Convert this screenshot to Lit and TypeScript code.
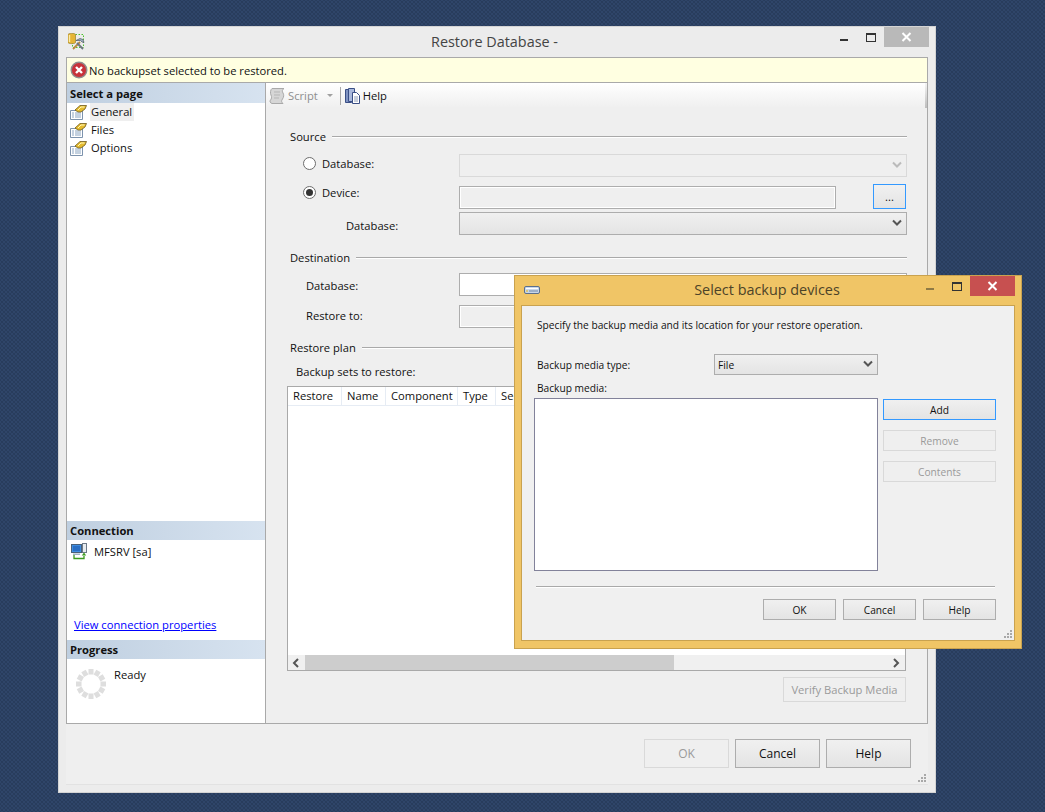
import { LitElement, html, css, svg } from "lit";
import { customElement } from "lit/decorators.js";

const chevron = (dir: "down" | "left" | "right", color = "#555") => {
  const d =
    dir === "down"
      ? "M1 1.5 5 5.5 9 1.5"
      : dir === "left"
        ? "M6 1 2 5 6 9"
        : "M2 1 6 5 2 9";
  return html`<svg width="10" height="10" viewBox="0 0 10 10" style="flex:none">
    <path d=${d} fill="none" stroke=${color} stroke-width="2" />
  </svg>`;
};

const pageIcon = html`<svg width="17" height="15" viewBox="0 0 17 15">
  <path d="M.5 5.500h12v9H.5z" fill="#fff" stroke="#7d93ad" />
  <path d="M2 8h2M5 8h6M2 10h2M5 10h6M2 12h2M5 12h6" stroke="#8aa4c0" />
  <path d="M5 5 10 .5h6.500L15 4l-4 3H8z" fill="#e5bb2e" stroke="#6e5a1c" stroke-width=".8" />
  <path d="M8 5l3-3h3.500" fill="none" stroke="#fff7b8" />
</svg>`;

const errorIcon = html`<svg width="18" height="18" viewBox="0 0 18 18">
  <circle cx="9" cy="9" r="7.800" fill="#c8323a" stroke="#8f8f8f" stroke-width="1.400" />
  <path d="M6 6l6 6M12 6l-6 6" stroke="#fff" stroke-width="2.400" />
</svg>`;

const appIcon = html`<svg width="18" height="18" viewBox="0 0 18 18">
  <rect x="4.500" y="1.500" width="11" height="13" fill="none" stroke="#4fc22e" stroke-dasharray="1.500 1.500" />
  <path d="M0 1.500C0 0 7.500 0 7.500 1.500v8C7.500 11 0 11 0 9.500z" fill="#e6b536" stroke="#97802a" stroke-width=".7" />
  <path d="M1.500 2v7" stroke="#fbeaa8" stroke-width="1.400" />
  <path d="M5 16 12 9" stroke="#b88a3c" stroke-width="1.800" />
  <path d="M15 16 9 10" stroke="#6d7680" stroke-width="1.800" />
  <path d="M8 7.500l4-2 3 1 1 3-2-.5-1.500-1.500z" fill="#9fb0c2" stroke="#4f5a66" stroke-width=".7" />
</svg>`;

const scriptIcon = html`<svg width="17" height="18" viewBox="0 0 17 18">
  <path d="M3 1.500h12c-2 1-2 3-1 4.500s1 4-.5 6-1 3 .5 4.500H3c-2-.5-2.500-2.500-1.500-3.500s1.500-3 .5-5-.5-5.500 1-6.500z" fill="#d6d6d6" stroke="#a9a9a9" />
  <path d="M5 5h6M5 8h6M5 11h5" stroke="#b5b5b5" />
</svg>`;

const helpIcon = html`<svg width="17" height="18" viewBox="0 0 17 18">
  <path d="M1.500 2.500h6v13h-6z" fill="#7f93c2" stroke="#3a4f86" />
  <path d="M4.500 1.500h6v13h-6z" fill="#a9b8dc" stroke="#3a4f86" />
  <path d="M8.500 5.500h4l3 3v8h-7z" fill="#fff" stroke="#3a4f86" />
  <path d="M10 10h4M10 12h4M10 14h4" stroke="#8f9db8" />
</svg>`;

const serverIcon = html`<svg width="17" height="17" viewBox="0 0 17 17">
  <rect x=".5" y="1.500" width="10" height="8" fill="#3f8de0" stroke="#4a6078" />
  <rect x="2" y="3" width="7" height="5" fill="#2a6fc4" />
  <path d="M2 10.500h7V12H2z" fill="#9fb0c2" />
  <rect x="11.500" y=".5" width="4" height="9" fill="#e8ecf0" stroke="#6d7a88" />
  <path d="M3 12v3.500h10V13" fill="none" stroke="#3b9a1e" stroke-width="1.300" />
  <path d="M13 9.500 10.800 12.500h4.400z" fill="#3b9a1e" />
</svg>`;

const driveIcon = html`<svg width="16" height="8" viewBox="0 0 16 8">
  <rect x=".5" y=".5" width="15" height="7" rx="1.500" fill="#c9d7ea" stroke="#5b6f8c" />
  <path d="M2 2.500h12" stroke="#fff" />
  <path d="M2 5h2" stroke="#d9c25a" stroke-width="1.400" />
  <path d="M5 5h9" stroke="#6f87a8" />
</svg>`;

const spinner = html`<svg width="32" height="32" viewBox="0 0 32 32">
  ${Array.from({ length: 12 }, (_, i) =>
    svg`<rect x="13.500" y="1" width="5" height="5.500" fill="#dedede" transform="rotate(${i * 30} 16 16)" />`,
  )}
</svg>`;

const grip = html`<svg class="grip" width="8" height="8" viewBox="0 0 8 8">
  <path d="M6 0h2v2H6zM3 3h2v2H3zM6 3h2v2H6zM0 6h2v2H0zM3 6h2v2H3zM6 6h2v2H6z" fill="#a8a8a8" />
</svg>`;

const controls = (closeClass: string, dark: string) => html`<div class="controls">
  <svg class="ctl-min" width="8" height="2"><rect width="8" height="2" fill=${dark} /></svg>
  <svg class="ctl-max" width="10" height="9">
    <rect x=".5" y=".5" width="9" height="8" fill="none" stroke="#333" />
    <rect x="0" y="0" width="10" height="2" fill="#333" />
  </svg>
  <div class="ctl-close ${closeClass}">
    <svg width="11" height="10" viewBox="0 0 11 10">
      <path d="M1.500 1 9.500 9M9.500 1 1.500 9" stroke="#fff" stroke-width="2" />
    </svg>
  </div>
</div>`;

@customElement("app-root")
export class AppRoot extends LitElement {
  static styles = css`
    :host {
      display: block;
      position: relative;
      width: 1045px;
      height: 812px;
      overflow: hidden;
      background-color: #2f4569;
      background-image: radial-gradient(#283c5c 0.7px, transparent 0.8px),
        radial-gradient(#283c5c 0.7px, transparent 0.8px);
      background-size: 4px 4px;
      background-position: 0 0, 2px 2px;
      font-family: "Open Sans", "Noto Sans", sans-serif;
      font-size: 11.2px;
      color: #111;
    }
    svg {
      display: block;
    }
    .window {
      position: absolute;
      box-sizing: border-box;
      display: flex;
      flex-direction: column;
    }
    .main {
      left: 58px;
      top: 26px;
      width: 878px;
      height: 767px;
      background: #ececec;
      border: 1px solid #d4d4d4;
    }
    .second {
      left: 514px;
      top: 275px;
      width: 508px;
      height: 374px;
      background: #f0c566;
      border: 1px solid #c9a24f;
    }
    .titlebar {
      position: relative;
      flex: none;
      box-sizing: border-box;
      padding-bottom: 2px;
      display: flex;
      align-items: center;
      justify-content: center;
      font-size: 14.4px;
      color: #444;
    }
    .main .titlebar {
      height: 30px;
      padding-right: 5px;
    }
    .second .titlebar {
      height: 29px;
      padding-right: 2px;
      color: #4d4328;
    }
    .title-icon {
      position: absolute;
      left: 9px;
      top: 6px;
    }
    .second .title-icon {
      left: 9px;
      top: 10px;
    }
    .controls {
      position: absolute;
      right: 6px;
      top: 0;
      display: flex;
      align-items: flex-start;
    }
    .ctl-min {
      margin-top: 12px;
      margin-right: 18px;
    }
    .ctl-max {
      margin-top: 6px;
      margin-right: 8px;
    }
    .ctl-close {
      width: 45px;
      height: 20px;
      display: flex;
      align-items: center;
      justify-content: center;
    }
    .close-grey {
      background: #b9b9b9;
    }
    .close-red {
      background: #c75050;
    }

    /* main window */
    .frame {
      flex: none;
      margin: 0 7px;
      height: 667px;
      box-sizing: border-box;
      border: 1px solid #a9a9a9;
      display: flex;
      flex-direction: column;
      background: #efefef;
    }
    .banner {
      flex: none;
      height: 24px;
      box-sizing: border-box;
      background: #ffffe1;
      display: flex;
      align-items: center;
      gap: 1px;
      padding-left: 3px;
    }
    .split {
      flex: 1;
      min-height: 0;
      display: flex;
      border-top: 1px solid #a9a9a9;
    }
    .left {
      flex: none;
      width: 199px;
      box-sizing: border-box;
      background: #fff;
      border-right: 1px solid #a9a9a9;
      display: flex;
      flex-direction: column;
    }
    .head {
      flex: none;
      height: 19px;
      padding-left: 3px;
      display: flex;
      align-items: center;
      font-weight: 700;
      background: linear-gradient(90deg, #bfcfe0, #d7e3f0);
    }
    .head.first {
      height: 20px;
    }
    .pages {
      flex: 1;
    }
    .page {
      height: 18px;
      display: flex;
      align-items: center;
      padding-left: 3px;
    }
    .page span {
      margin-left: 3px;
      padding: 0 2px 0 1px;
      line-height: 18px;
    }
    .page.on span {
      background: #efefef;
    }
    .conn {
      flex: none;
      height: 100px;
      padding-left: 4px;
      position: relative;
    }
    .conn-row {
      display: flex;
      align-items: center;
      gap: 6px;
      height: 22px;
    }
    .link {
      position: absolute;
      left: 7px;
      top: 77px;
      color: #0000ff;
      text-decoration: underline;
    }
    .prog {
      flex: none;
      height: 64px;
      box-sizing: border-box;
      padding: 9px 0 0 8px;
      display: flex;
      gap: 7px;
    }
    .prog span {
      margin-top: -1px;
    }
    .right {
      flex: 1;
      min-width: 0;
      display: flex;
      flex-direction: column;
    }
    .toolbar {
      flex: none;
      height: 25px;
      padding-left: 3px;
      display: flex;
      align-items: center;
      background: linear-gradient(#fff, #efefef);
      position: relative;
    }
    .toolbar::after {
      content: "";
      position: absolute;
      right: 0;
      top: 0;
      bottom: 0;
      width: 2px;
      background: linear-gradient(#f4f4f4, #bdbdbd);
    }
    .toolbar .muted {
      color: #8e8e8e;
      margin-left: 2px;
    }
    .tb-arrow {
      margin-left: 9px;
      width: 0;
      height: 0;
      border: 3px solid transparent;
      border-top: 3px solid #a0a0a0;
      border-bottom: 0;
    }
    .tb-sep {
      width: 1px;
      height: 18px;
      background: #a9a9a9;
      margin: 0 3px 0 7px;
    }
    .tb-help {
      margin-left: 2px;
    }
    .body {
      flex: 1;
      padding: 20px 20px 0 24px;
      display: flex;
      flex-direction: column;
    }
    .legend {
      height: 16px;
      display: flex;
      align-items: center;
      gap: 6px;
    }
    .legend::after {
      content: "";
      flex: 1;
      height: 1px;
      background: #a9a9a9;
      box-shadow: 0 1px 0 #fff;
    }
    .row {
      display: flex;
      align-items: center;
      height: 23px;
    }
    .row-source {
      margin-top: 10px;
    }
    .row-device {
      margin-top: 9px;
    }
    .row-tight {
      margin-top: 3px;
    }
    .row-dest {
      margin-top: 8px;
    }
    .label {
      flex: none;
      width: 169px;
      box-sizing: border-box;
    }
    .indent16 {
      padding-left: 16px;
    }
    .indent56 {
      padding-left: 56px;
    }
    .radio-label {
      flex: none;
      width: 169px;
      padding-left: 13px;
      box-sizing: border-box;
      display: flex;
      align-items: center;
      gap: 6px;
    }
    .up2 {
      margin-bottom: 4px;
    }
    .up5 {
      margin-bottom: 10px;
    }
    .down1 {
      margin-top: 2px;
    }
    .down2 {
      margin-top: 3px;
    }
    .up1 {
      margin-bottom: 2px;
    }
    .legend-dest {
      margin-top: 14px;
    }
    .legend-plan {
      margin-top: 11px;
    }
    .sets {
      margin: 9px 0 0 6px;
      line-height: 16px;
    }
    .radio {
      width: 11px;
      height: 11px;
      border: 1px solid #6d6d6d;
      border-radius: 50%;
      background: #fff;
      display: flex;
      align-items: center;
      justify-content: center;
    }
    .radio.on::after {
      content: "";
      width: 7px;
      height: 7px;
      border-radius: 50%;
      background: #333;
    }
    .field {
      flex: 1;
      height: 23px;
      box-sizing: border-box;
      border: 1px solid #adadad;
      background: #fff;
    }
    .field.grey {
      background: #efefef;
      border-color: #adadad;
      box-shadow: inset 0 0 0 1px #fff;
    }
    .combo {
      flex: 1;
      height: 23px;
      box-sizing: border-box;
      border: 1px solid #adadad;
      background: linear-gradient(#f0f0f0, #e4e4e4);
      display: flex;
      align-items: center;
      justify-content: flex-end;
      padding-right: 4px;
    }
    .combo.off {
      background: #efefef;
      border-color: #d9d9d9;
    }
    .browse {
      flex: none;
      width: 33px;
      height: 25px;
      margin: -2px 1px 0 37px;
    }
    .table {
      flex: none;
      margin: 6px 1px 0 -3px;
      height: 285px;
      box-sizing: border-box;
      border: 1px solid #a9a9a9;
      background: #fff;
      display: flex;
      flex-direction: column;
    }
    .thead {
      flex: none;
      height: 18px;
      display: flex;
      border-bottom: 1px solid #e6ecf4;
    }
    .th {
      box-sizing: border-box;
      padding-left: 5px;
      border-right: 1px solid #e6ecf4;
      line-height: 18px;
    }
    .tbody {
      flex: 1;
    }
    .hscroll {
      flex: none;
      height: 15px;
      display: flex;
      align-items: center;
      background: #f0f0f0;
    }
    .sb-btn {
      flex: none;
      width: 17px;
      height: 15px;
      display: flex;
      align-items: center;
      justify-content: center;
    }
    .sb-thumb {
      flex: none;
      width: 369px;
      height: 15px;
      background: #cdcdcd;
    }
    .sb-track {
      flex: 1;
    }
    .verify-row {
      display: flex;
      justify-content: flex-end;
      margin: 6px 1px 0 0;
    }
    .btn {
      box-sizing: border-box;
      border: 1px solid #adadad;
      background: linear-gradient(#f0f0f0, #e4e4e4);
      display: flex;
      align-items: center;
      justify-content: center;
    }
    .btn.off {
      background: #efefef;
      border-color: #d9d9d9;
      color: #9a9a9a;
    }
    .btn.focus {
      border-color: #3399ff;
    }
    .verify {
      width: 123px;
      height: 25px;
    }
    .footer {
      flex: 1;
      position: relative;
      margin: 0 7px 7px;
      background: #efefef;
      border-bottom: 1px solid #e2e2e2;
      display: flex;
      justify-content: flex-end;
      gap: 6px;
      padding: 15px 17px 0 0;
    }
    .footer .btn {
      width: 85px;
      height: 29px;
      font-size: 12px;
    }
    .grip {
      position: absolute;
      right: 2px;
      bottom: 2px;
    }

    /* second window */
    .client {
      flex: 1;
      position: relative;
      margin: 0 6px 7px 6px;
      border: 1px solid #c9a24f;
      background: #f0f0f0;
      padding: 11px 18px 0 12px;
      font-size: 10.2px;
    }
    .client-intro {
      margin: 0 0 0 3px;
      line-height: 16px;
    }
    .media-type {
      display: flex;
      align-items: center;
      height: 21px;
      margin: 21px 118px 0 3px;
    }
    .media-type .lbl {
      flex: none;
      width: 177px;
    }
    .select {
      flex: 1;
      height: 21px;
      box-sizing: border-box;
      border: 1px solid #adadad;
      background: linear-gradient(#f0f0f0, #e4e4e4);
      display: flex;
      align-items: center;
      justify-content: space-between;
      padding: 0 4px 0 3px;
    }
    .media-label {
      margin: 5px 0 0 3px;
      line-height: 16px;
    }
    .media {
      display: flex;
      gap: 5px;
      margin-top: 2px;
    }
    .listbox {
      flex: none;
      width: 344px;
      height: 173px;
      box-sizing: border-box;
      border: 1px solid #82829a;
      background: #fff;
    }
    .side {
      flex: 1;
      display: flex;
      flex-direction: column;
      gap: 10px;
      padding-top: 1px;
    }
    .side .btn {
      height: 21px;
    }
    .divider {
      height: 1px;
      background: #a9a9a9;
      margin: 15px 1px 0 2px;
      box-shadow: 0 1px 0 #fff;
    }
    .actions {
      display: flex;
      justify-content: flex-end;
      gap: 7px;
      margin-top: 12px;
    }
    .actions .btn {
      width: 73px;
      height: 21px;
    }
  `;

  private renderMain() {
    return html`<div class="window main">
      <div class="titlebar">
        <div class="title-icon">${appIcon}</div>
        Restore Database -
        ${controls("close-grey", "#333")}
      </div>
      <div class="frame">
        <div class="banner">${errorIcon}<span>No backupset selected to be restored.</span></div>
        <div class="split">
          <div class="left">
            <div class="head first">Select a page</div>
            <div class="pages">
              <div class="page on">${pageIcon}<span>General</span></div>
              <div class="page">${pageIcon}<span>Files</span></div>
              <div class="page">${pageIcon}<span>Options</span></div>
            </div>
            <div class="head">Connection</div>
            <div class="conn">
              <div class="conn-row">${serverIcon}<span>MFSRV [sa]</span></div>
              <span class="link">View connection properties</span>
            </div>
            <div class="head">Progress</div>
            <div class="prog">${spinner}<span>Ready</span></div>
          </div>
          <div class="right">
            <div class="toolbar">
              ${scriptIcon}<span class="muted">Script</span>
              <div class="tb-arrow"></div>
              <div class="tb-sep"></div>
              ${helpIcon}<span class="tb-help">Help</span>
            </div>
            <div class="body">
              <div class="legend">Source</div>
              <div class="row row-source">
                <div class="radio-label up2"><div class="radio"></div>Database:</div>
                <div class="combo off">${chevron("down", "#bbb")}</div>
              </div>
              <div class="row row-device">
                <div class="radio-label up5"><div class="radio on"></div>Device:</div>
                <div class="field grey"></div>
                <div class="btn browse focus">...</div>
              </div>
              <div class="row row-tight">
                <div class="label indent56 down2">Database:</div>
                <div class="combo">${chevron("down")}</div>
              </div>
              <div class="legend legend-dest">Destination</div>
              <div class="row row-dest">
                <div class="label indent16 down1">Database:</div>
                <div class="field"></div>
              </div>
              <div class="row row-device">
                <div class="label indent16 up1">Restore to:</div>
                <div class="field grey"></div>
              </div>
              <div class="legend legend-plan">Restore plan</div>
              <div class="sets">Backup sets to restore:</div>
              <div class="table">
                <div class="thead">
                  <div class="th" style="width:54px">Restore</div>
                  <div class="th" style="width:44px">Name</div>
                  <div class="th" style="width:72px">Component</div>
                  <div class="th" style="width:38px">Type</div>
                  <div class="th" style="width:60px">Server</div>
                </div>
                <div class="tbody"></div>
                <div class="hscroll">
                  <div class="sb-btn">${chevron("left")}</div>
                  <div class="sb-thumb"></div>
                  <div class="sb-track"></div>
                  <div class="sb-btn">${chevron("right")}</div>
                </div>
              </div>
              <div class="verify-row"><div class="btn off verify">Verify Backup Media</div></div>
            </div>
          </div>
        </div>
      </div>
      <div class="footer">
        <div class="btn off">OK</div>
        <div class="btn">Cancel</div>
        <div class="btn">Help</div>
        ${grip}
      </div>
    </div>`;
  }

  private renderDevices() {
    return html`<div class="window second">
      <div class="titlebar">
        <div class="title-icon">${driveIcon}</div>
        Select backup devices
        ${controls("close-red", "#8f7a45")}
      </div>
      <div class="client">
        <p class="client-intro">Specify the backup media and its location for your restore operation.</p>
        <div class="media-type">
          <div class="lbl">Backup media type:</div>
          <div class="select"><span>File</span>${chevron("down")}</div>
        </div>
        <div class="media-label">Backup media:</div>
        <div class="media">
          <div class="listbox"></div>
          <div class="side">
            <div class="btn focus">Add</div>
            <div class="btn off">Remove</div>
            <div class="btn off">Contents</div>
          </div>
        </div>
        <div class="divider"></div>
        <div class="actions">
          <div class="btn">OK</div>
          <div class="btn">Cancel</div>
          <div class="btn">Help</div>
        </div>
        ${grip}
      </div>
    </div>`;
  }

  render() {
    return html`${this.renderMain()}${this.renderDevices()}`;
  }
}
